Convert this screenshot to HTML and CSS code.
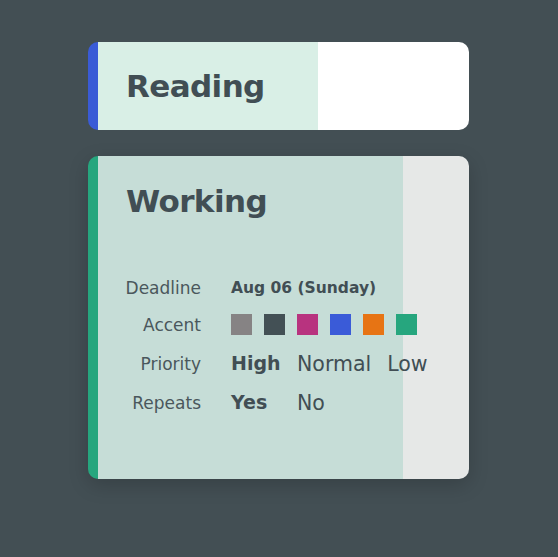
FILE: index.html
```html
<!DOCTYPE html>
<html lang="en">
<head>
<meta charset="utf-8">
<title>Tasks</title>
<link rel="stylesheet" href="styles.css">
</head>
<body>
<main class="board">
  <section class="card card-reading">
    <h2 class="card-title">Reading</h2>
  </section>
  <section class="card card-working">
    <h2 class="card-title">Working</h2>
    <dl class="details">
      <dt>Deadline</dt>
      <dd class="date">Aug 06 (Sunday)</dd>
      <dt>Accent</dt>
      <dd class="swatches">
        <span class="swatch sw-gray"></span>
        <span class="swatch sw-slate"></span>
        <span class="swatch sw-magenta"></span>
        <span class="swatch sw-blue"></span>
        <span class="swatch sw-orange"></span>
        <span class="swatch sw-green"></span>
      </dd>
      <dt>Priority</dt>
      <dd class="options">
        <span class="opt active">High</span>
        <span class="opt">Normal</span>
        <span class="opt">Low</span>
      </dd>
      <dt>Repeats</dt>
      <dd class="options">
        <span class="opt active">Yes</span>
        <span class="opt">No</span>
      </dd>
    </dl>
  </section>
</main>
</body>
</html>
```
FILE: styles.css
```css
* { box-sizing: border-box; }
html, body { margin: 0; padding: 0; }
body {
  background: #434f54;
  font-family: "DejaVu Sans", "Open Sans", sans-serif;
  color: #414e54;
  width: 558px;
  height: 557px;
  overflow: hidden;
}
.board {
  padding: 42px 0 0 88px;
  display: flex;
  flex-direction: column;
  gap: 26px;
}
.card {
  width: 381px;
  border-radius: 10px;
  overflow: hidden;
  border-left: 10px solid;
}
.card-reading {
  height: 88px;
  border-left-color: #3a5bd6;
  background: linear-gradient(to right, #d9efe6 220px, #ffffff 220px);
  padding: 24px 0 0 28px;
}
.card-working {
  height: 323px;
  border-left-color: #26a67e;
  background: linear-gradient(to right, #c6ddd7 305px, #e6e8e7 305px);
  padding: 25px 0 0 0;
  box-shadow: 0 6px 20px rgba(0, 0, 0, 0.18);
}
.card-title {
  margin: 0;
  font-size: 31px;
  line-height: 40px;
  font-weight: bold;
  letter-spacing: -0.6px;
}
.card-working .card-title { padding-left: 28px; }
.details {
  margin: 48px 0 0 0;
  display: grid;
  grid-template-columns: 103px auto;
  column-gap: 30px;
  grid-template-rows: 38px 35px 43px 36px;
  align-items: center;
}
.details dt {
  text-align: right;
  font-size: 17px;
  color: #4a575c;
}
.details dd { margin: 0; }
.date {
  font-size: 15.5px;
  font-weight: bold;
}
.swatches {
  display: flex;
  gap: 12px;
}
.swatch {
  width: 21px;
  height: 21px;
  display: block;
}
.sw-gray { background: #868384; }
.sw-slate { background: #435055; }
.sw-magenta { background: #b8337f; }
.sw-blue { background: #3a5bd8; }
.sw-orange { background: #e77414; }
.sw-green { background: #26a67e; }
.options {
  display: flex;
  gap: 16px;
  font-size: 20.5px;
}
.opt { min-width: 50px; }
.opt.active {
  font-weight: bold;
  font-size: 19px;
}
```
